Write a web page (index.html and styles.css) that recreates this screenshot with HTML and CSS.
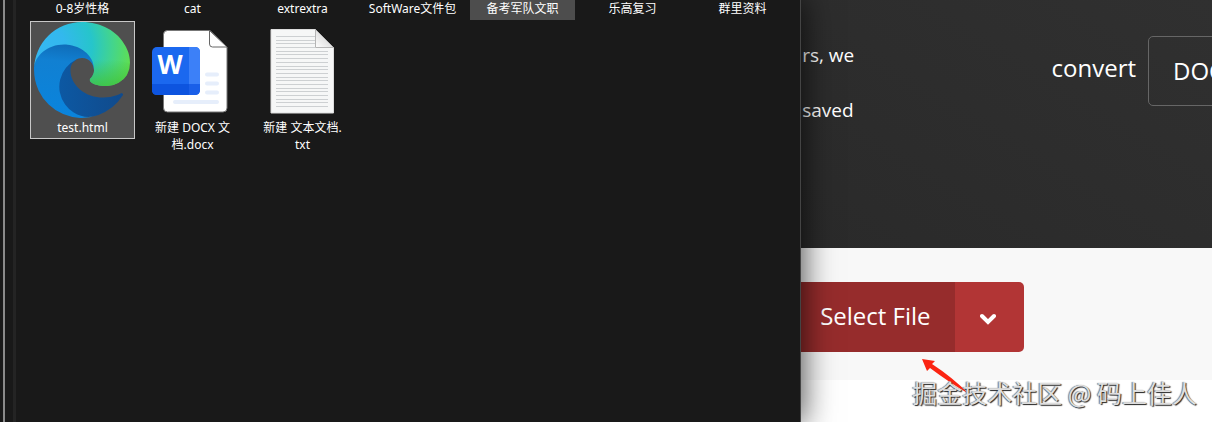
FILE: index.html
```
<!DOCTYPE html>
<html lang="zh-CN">
<head>
  <meta charset="UTF-8">
  <title>Select File</title>
  <link rel="stylesheet" href="styles.css">
</head>
<body>

<section class="explorer">
  <div class="edge"></div>
  <div class="splitter"></div>
  <ul class="files">
    <li class="folder"><span>0-8岁性格</span></li>
    <li class="folder"><span>cat</span></li>
    <li class="folder"><span>extrextra</span></li>
    <li class="folder"><span>SoftWare文件包</span></li>
    <li class="folder hover"><span>备考军队文职</span></li>
    <li class="folder"><span>乐高复习</span></li>
    <li class="folder"><span>群里资料</span></li>

    <li class="file selected">
      <svg class="icon" viewBox="0 0 256 256" aria-hidden="true">
        <defs>
          <linearGradient id="navy" x1="60" y1="177" x2="241" y2="177" gradientUnits="userSpaceOnUse">
            <stop offset="0" stop-color="#0c59a4"/>
            <stop offset="1" stop-color="#114a8b"/>
          </linearGradient>
          <linearGradient id="blue" x1="90" y1="60" x2="70" y2="245" gradientUnits="userSpaceOnUse">
            <stop offset="0" stop-color="#0f6cb8"/>
            <stop offset=".25" stop-color="#1180d2"/>
            <stop offset="1" stop-color="#0a84dc"/>
          </linearGradient>
          <radialGradient id="green" cx="0" cy="0" r="1" gradientUnits="userSpaceOnUse" gradientTransform="translate(20 65) scale(245 230)">
            <stop offset="0" stop-color="#35b8f1"/>
            <stop offset=".25" stop-color="#33b8ee"/>
            <stop offset=".55" stop-color="#26c5cb"/>
            <stop offset=".78" stop-color="#44d58b"/>
            <stop offset="1" stop-color="#62e04c"/>
          </radialGradient>
          <linearGradient id="greenShade" x1="190" y1="100" x2="190" y2="172" gradientUnits="userSpaceOnUse">
            <stop offset="0" stop-color="#3cba3c" stop-opacity="0"/>
            <stop offset="1" stop-color="#3cc23e" stop-opacity=".8"/>
          </linearGradient>
        </defs>
        <path fill="url(#navy)" d="M231 190.5c-3.4 1.8-6.9 3.4-10.5 4.7a101.5 101.5 0 0 1-35.6 6.4c-47 0-87.8-32.3-87.8-73.8a31.3 31.3 0 0 1 16.3-27.2c-42.5 1.8-53.4 46-53.4 72 0 73.3 67.7 80.8 82.2 80.8 7.9 0 19.8-2.3 27-4.6l1.2-.4a128.3 128.3 0 0 0 66.6-52.8 4 4 0 0 0-6-5.1z"/>
        <path fill="url(#blue)" d="M105.7 241.4a79.2 79.2 0 0 1-22.7-21.3 80.7 80.7 0 0 1 29.5-120c3.2-1.5 8.5-4.1 15.6-4a32.4 32.4 0 0 1 25.7 13 31.9 31.9 0 0 1 6.3 18.7c0-.2 24.5-79.6-80-79.6-43.9 0-80 41.6-80 78.2a130.2 130.2 0 0 0 12.1 56 128 128 0 0 0 156.4 67 75.5 75.5 0 0 1-62.8-8z"/>
        <path fill="url(#green)" d="M152.3 148.9c-.9 1-3.4 2.5-3.4 5.6 0 2.6 1.7 5.2 4.8 7.3 14.3 10 41.4 8.6 41.5 8.6a59.6 59.6 0 0 0 30.3-8.3 61.4 61.4 0 0 0 30.4-52.9c.3-22.4-8-37.3-11.3-43.9C223.5 23.9 177.7 0 128 0A128 128 0 0 0 0 126.2c.5-36.5 36.8-66 80-66 3.5 0 23.5.3 42 10a72.6 72.6 0 0 1 30.9 29.3c6.1 10.6 7.2 24.1 7.2 29.5s-2.7 13.3-7.8 19.9z"/>
        <path fill="url(#greenShade)" d="M152.3 148.9c-.9 1-3.4 2.5-3.4 5.6 0 2.6 1.7 5.2 4.8 7.3 14.3 10 41.4 8.6 41.5 8.6a59.6 59.6 0 0 0 30.3-8.3 61.4 61.4 0 0 0 30.4-52.9l-100-20c3 6 4.2 34 4.2 39.8s-2.7 13.3-7.8 19.9z"/>
      </svg>
      <span>test.html</span>
    </li>
    <li class="file">
      <svg class="icon" viewBox="0 0 96 96" aria-hidden="true">
        <path fill="#fff" stroke="#777" d="M23.500 8.500H66l17 17V86q0 4-4 4H23.500q-4 0-4-4V12.500q0-4 4-4z"/>
        <path fill="#191919" d="M66 7h18v18z"/>
        <path fill="#fff" stroke="#666" d="M65.500 8.500V22q0 3 3 3H83z"/>
        <g stroke="#e6eefb" stroke-width="4" stroke-linecap="round">
          <path d="M63 52.500h10M63 61.500h10M63 70.500h10M31 80h42"/>
        </g>
        <rect x="8" y="25" width="48" height="48" rx="5" fill="#1b68ef"/>
        <path fill="#3c80f8" d="M45 25h6q5 0 5 5v34H45z"/>
        <path fill="#0d54df" d="M8 62h37v11H13q-5 0-5-5z"/>
        <path fill="#1a5fe8" d="M45 62h11v6q0 5-5 5h-6z"/>
        <text class="word" x="26" y="52" text-anchor="middle">W</text>
      </svg>
      <span>新建 DOCX 文档.docx</span>
    </li>
    <li class="file">
      <svg class="icon" viewBox="0 0 96 96" aria-hidden="true">
        <defs>
          <linearGradient id="fold" x1="0" y1="1" x2="1" y2="0">
            <stop offset="0" stop-color="#fff"/>
            <stop offset="1" stop-color="#c4c4c4"/>
          </linearGradient>
        </defs>
        <path fill="#f6f7f7" stroke="#dcdcdc" d="M17 7.500h44.500l18 18V91H17z"/>
        <path stroke="#cdd0d2" d="M22 14.500h39M22 18.500h39M22 21.500h39M22 25.500h39M22 29.500h52M22 32.500h52M22 36.500h52M22 40.500h52M22 44.500h52M22 47.500h52M22 51.500h52M22 55.500h52M22 58.500h52M22 62.500h52M22 66.500h52M22 69.500h52M22 73.500h52M22 77.500h52M22 80.500h52M22 84.500h52"/>
        <path fill="url(#fold)" stroke="#b5b5b5" d="M61.500 7.500v18h18z"/>
      </svg>
      <span>新建 文本文档.<br>txt</span>
    </li>
  </ul>
</section>

<main class="site">
  <header class="hero">
    <p class="intro">rs, we<br>saved</p>
    <div class="convert">
      <label for="format">convert</label>
      <select id="format"><option>DOCX</option></select>
    </div>
  </header>
  <div class="upload">
    <button type="button" class="select-file">Select File</button>
    <button type="button" class="more" aria-label="More sources">
      <svg viewBox="0 0 16 12" width="16" height="12"><path d="M2 3l6 6 6-6"/></svg>
    </button>
  </div>
</main>

<svg class="arrow" viewBox="0 0 48 36" aria-hidden="true">
  <path d="M0 0l13 2-3 3q20 13 37 30Q28 24 8 9l-3 3z"/>
</svg>
<p class="watermark">掘金技术社区 @ 码上佳人</p>

</body>
</html>
```
FILE: styles.css
```
* { box-sizing: border-box; }
body { margin: 0; min-height: 100vh; display: flex; position: relative;
  overflow: hidden; background: white; color: white;
  font-family: "Noto Sans", "Noto Sans CJK SC", sans-serif; }

/* file manager window */
.explorer { flex: 0 0 auto; width: 66.1%; display: flex;
  position: relative; z-index: 1;
  background: #191919; border-right: 1px solid #444;
  box-shadow: 0 0 30px 2px rgba(0, 0, 0, 0.7); }
.edge { width: 5px; border-right: 2px solid #8a8a8a; }
.splitter { width: 11px; border-right: 3px solid #242424; }
.files { flex: 1; margin: 0; padding: 0 5px 0 14px; list-style: none;
  display: grid; grid-template-columns: repeat(7, minmax(0, 1fr));
  column-gap: 5px; row-gap: 1px; align-content: start; align-items: start; }
.files li { font-size: 12px; line-height: 17px; text-align: center; }
.folder { height: 20px; }
.hover { background: #4d4d4d; }
.file { min-height: 118px; padding: 0 10px; border: 1px solid transparent; }
.selected { background: #4f4f4f; border-color: #c8c8c8; }
.icon { display: block; width: 96px; height: 96px; margin: 0 -7px 1px; }
.file span { display: block; }
.word { fill: white; font: bold 26px "Open Sans", sans-serif; }

/* converter page */
.site { flex: 1; min-width: 0; overflow: hidden;
  font-family: "Open Sans", "Noto Sans", sans-serif; }
.hero { height: 248px; display: flex; justify-content: space-between;
  background: linear-gradient(to top right, #2a2a2a, #303030); }
.intro { margin: 28px 0 0 1px; font-size: 19px; line-height: 55px; }
.convert { display: flex; align-items: flex-start; gap: 12px;
  margin: 36px -80px 0 0; font-size: 24px; }
.convert label { line-height: 64px; }
.convert select { appearance: none; width: 144px; height: 70px;
  padding: 0 24px 2px; border: 1px solid #666; border-radius: 5px;
  background: transparent; color: white; font: inherit; }
.upload { display: flex; padding: 34px 0 28px; background: #f8f8f8; }
.upload button { height: 70px; border: 0; color: white;
  font: 24px "Open Sans", "Noto Sans", sans-serif; }
.upload .select-file { padding: 0 24px 4px 19px; background: #962c2c; }
.upload .more { width: 69px; padding: 0 2px 4px 0; background: #b23535;
  border-radius: 0 5px 5px 0; }
.more path { fill: none; stroke: white; stroke-width: 4; stroke-linecap: round; }

/* notes drawn over the page */
.arrow { position: absolute; z-index: 2; right: 242px; top: 359px;
  width: 48px; height: 36px; fill: #fb2412; }
.watermark { position: absolute; z-index: 3; right: 15px; bottom: 12px;
  margin: 0; font-size: 25px; line-height: 36px; color: #dedede;
  font-family: "Noto Sans CJK SC", sans-serif;
  text-shadow: 1px 1px 1px #222, -1px 0 1px #777; }
```
